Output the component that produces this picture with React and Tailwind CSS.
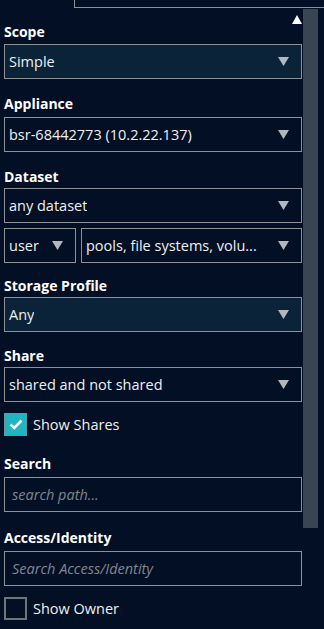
import React from 'react';

const font = { fontFamily: '"Open Sans", "Noto Sans", sans-serif' };

function Caret() {
  return (
    <svg width="11" height="9" viewBox="0 0 11 9" className="shrink-0">
      <polygon points="0,0 11,0 5.5,9" fill="#b4b8bd" />
    </svg>
  );
}

function Label({ children, className = '' }) {
  return (
    <div className={`h-5 text-[14px] leading-5 font-bold text-white ${className}`}>{children}</div>
  );
}

function Select({ value, filled, className = '' }) {
  return (
    <div
      className={`h-[35px] flex items-center justify-between pl-[4px] pr-3 border border-[#8d9196] ${
        filled ? 'bg-[#0b2338]' : 'bg-transparent'
      } ${className}`}
    >
      <span className="text-[14.5px] text-[#eef0f2] truncate">{value}</span>
      <Caret />
    </div>
  );
}

function Input({ placeholder }) {
  return (
    <div className="h-[35px] flex items-center pl-[7px] border border-[#8d9196]">
      <span className="text-[14.5px] italic text-[#7f8791]">{placeholder}</span>
    </div>
  );
}

function Check({ checked, label }) {
  return (
    <div className="flex items-center gap-[6px]">
      {checked ? (
        <div className="w-[23px] h-[23px] bg-[#1fb5c1] border border-[#5f9aa3] flex items-center justify-center">
          <svg width="14" height="11" viewBox="0 0 14 11">
            <path d="M1.5 5.5 L5.2 9 L12.5 1.5" fill="none" stroke="white" strokeWidth="2.6" />
          </svg>
        </div>
      ) : (
        <div className="w-[23px] h-[23px] border-2 border-[#6f747a]" />
      )}
      <span className="text-[14.5px] text-[#eef0f2]">{label}</span>
    </div>
  );
}

export default function App() {
  return (
    <div className="w-[324px] h-[629px] bg-[#030f24] overflow-hidden flex flex-col" style={font}>
      {/* edge of the panel above */}
      <div className="h-2 ml-[74px] border-l border-b border-[#8d9196] shrink-0" />

      <div className="flex flex-1">
        <div className="relative w-[303px] pl-1 pr-px pt-[14px]">
          <svg width="10" height="9" viewBox="0 0 10 9" className="absolute right-[1px] top-[7px]">
            <polygon points="5,0 10,9 0,9" fill="white" />
          </svg>

          <Label>Scope</Label>
          <Select value="Simple" filled className="mt-[2px]" />

          <Label className="mt-[15px]">Appliance</Label>
          <Select value="bsr-68442773 (10.2.22.137)" className="mt-[3px]" />

          <Label className="mt-[15px]">Dataset</Label>
          <Select value="any dataset" className="mt-[1px]" />
          <div className="flex gap-[5px] mt-[5px]">
            <Select value="user" className="w-[72px]" />
            <Select value="pools, file systems, volu..." className="flex-1" />
          </div>

          <Label className="mt-[13px]">Storage Profile</Label>
          <Select value="Any" filled className="mt-[1px]" />

          <Label className="mt-[14px]">Share</Label>
          <Select value="shared and not shared" className="mt-[1px]" />

          <div className="mt-[11px]">
            <Check checked label="Show Shares" />
          </div>

          <Label className="mt-[18px]">Search</Label>
          <div className="mt-[3px]">
            <Input placeholder="search path..." />
          </div>

          <Label className="mt-[16px]">Access/Identity</Label>
          <div className="mt-[3px]">
            <Input placeholder="Search Access/Identity" />
          </div>

          <div className="mt-[11px]">
            <Check label="Show Owner" />
          </div>
        </div>

        <div className="w-[15px] h-[519px] mt-px bg-[#3a4553] shrink-0" />
      </div>
    </div>
  );
}
